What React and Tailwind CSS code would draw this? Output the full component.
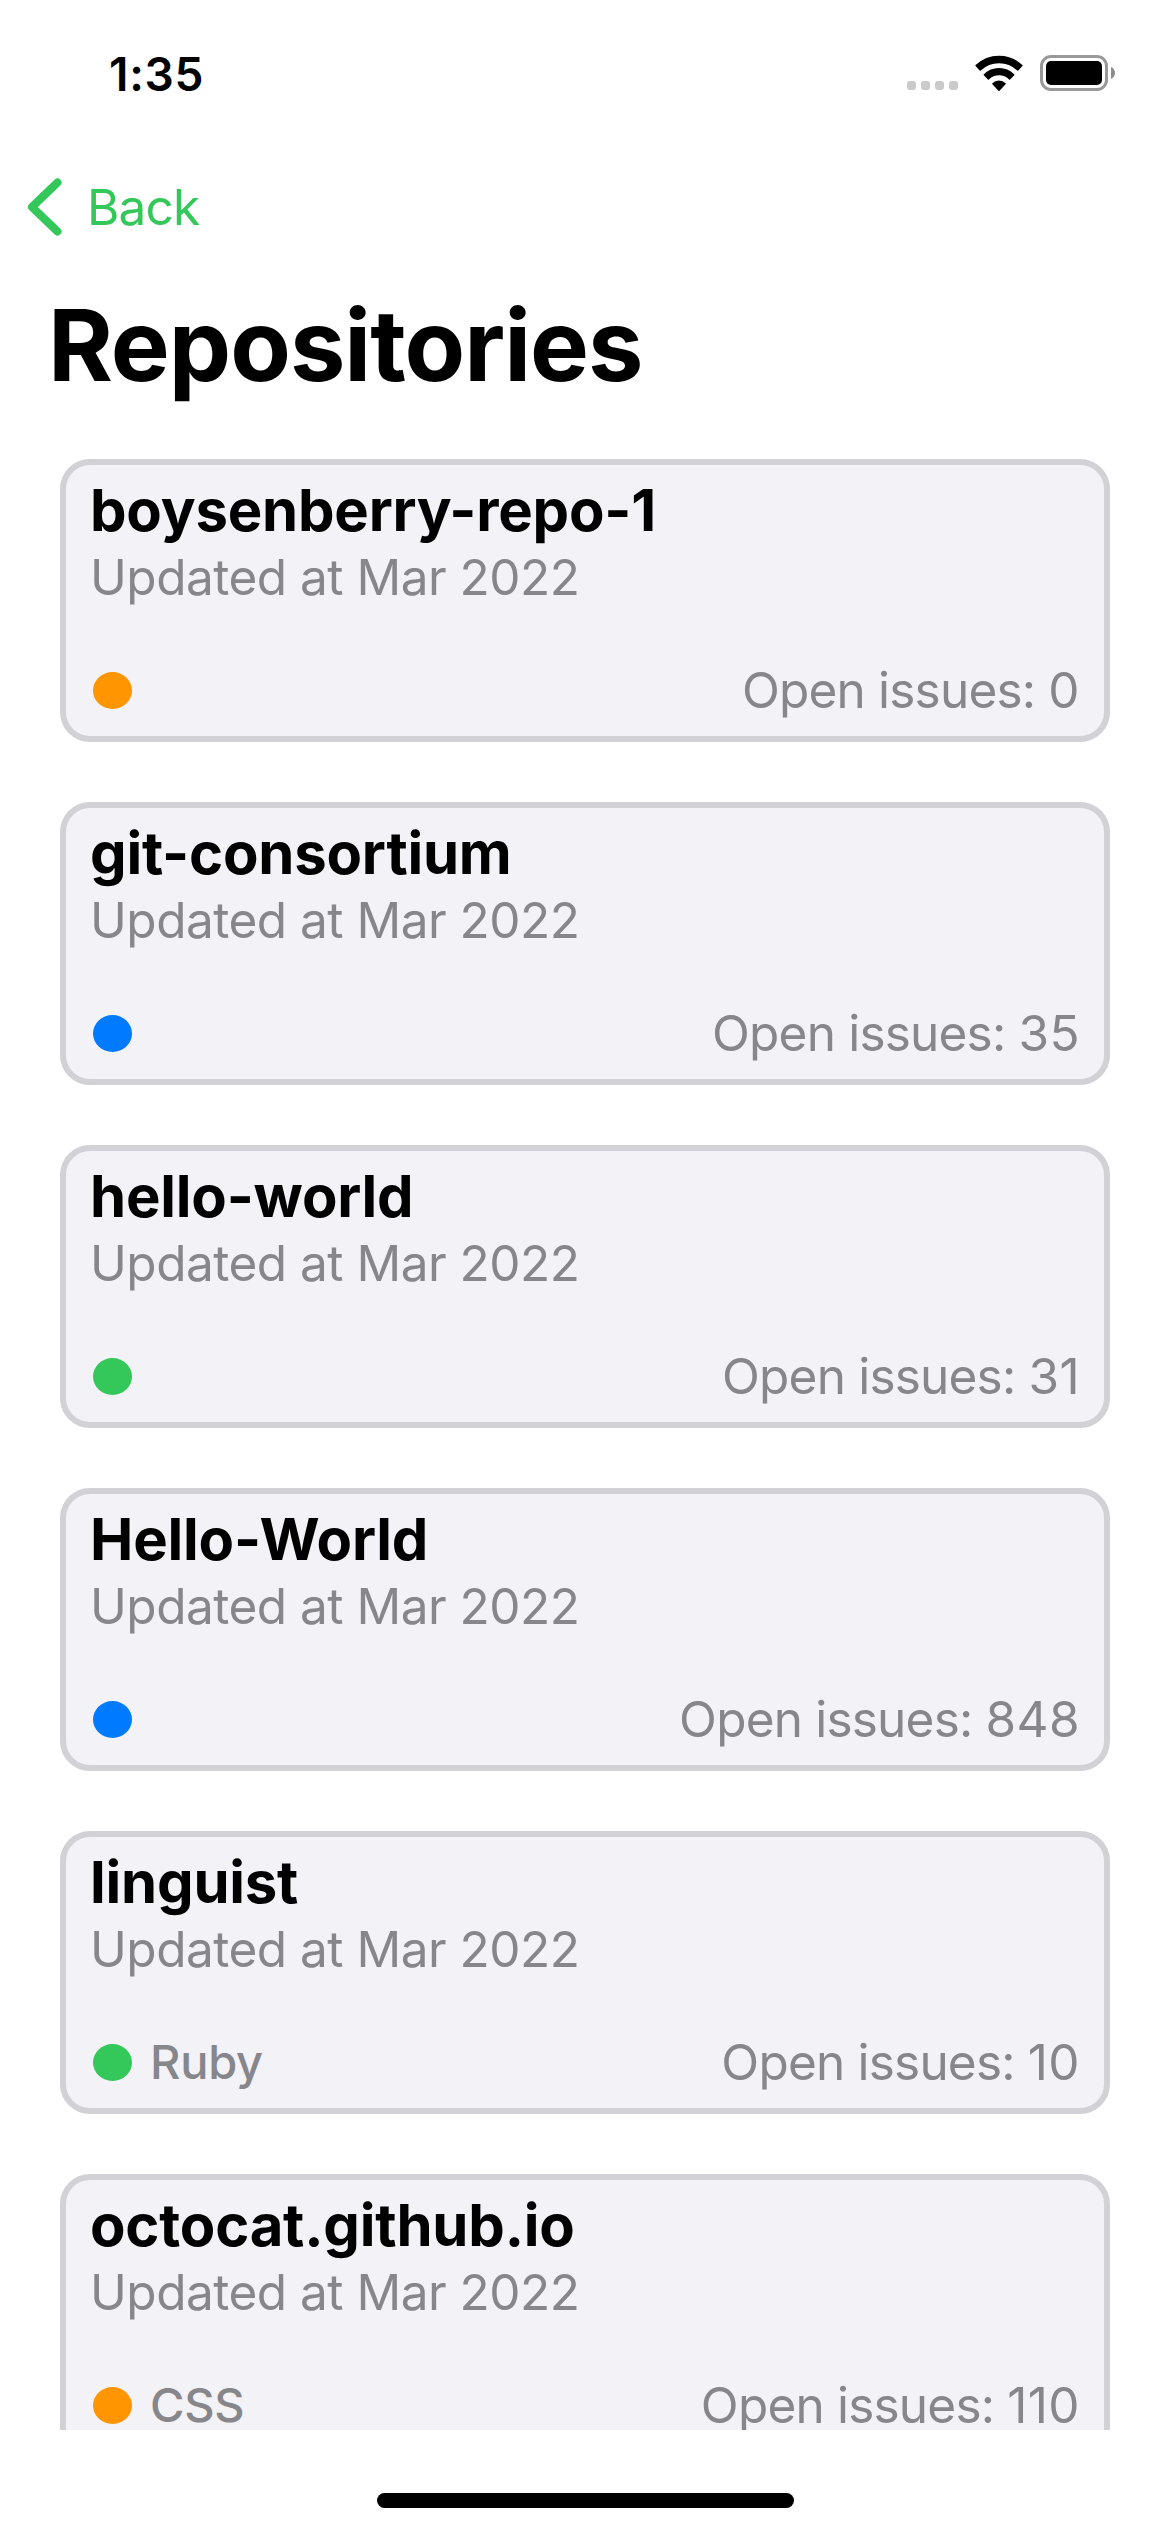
const repositories = [
  { name: "boysenberry-repo-1", dot: "bg-[#ff9500]", issues: 0 },
  { name: "git-consortium", dot: "bg-[#007aff]", issues: 35 },
  { name: "hello-world", dot: "bg-[#34c759]", issues: 31 },
  { name: "Hello-World", dot: "bg-[#007aff]", issues: 848 },
  { name: "linguist", dot: "bg-[#34c759]", language: "Ruby", issues: 10 },
  { name: "octocat.github.io", dot: "bg-[#ff9500]", language: "CSS", issues: 110 },
];

function WifiIcon() {
  return (
    <svg width="50" height="38" viewBox="-1 -1 50 38" className="block" strokeLinejoin="round">
      <g fill="#000" stroke="#000" strokeWidth="1.4">
        <path d="M1.1 10.6A33.3 33.3 0 0 1 46.9 10.6L42.8 15A27.2 27.2 0 0 0 5.2 15Z" />
        <path d="M9.3 19.7A20.8 20.8 0 0 1 38.7 19.7L34.6 24A15.1 15.1 0 0 0 13.4 24Z" />
        <path d="M17.9 28.8A8.3 8.3 0 0 1 30.1 28.8L24 35.3Z" />
      </g>
    </svg>
  );
}

function BatteryIcon() {
  return (
    <div className="flex items-center gap-[3px]">
      <div className="h-9 w-[68px] rounded-[11px] border-[3px] border-[#999] p-[3px]">
        <div className="h-full rounded-[5px] bg-black" />
      </div>
      <svg width="4" height="12" viewBox="0 0 4 12" className="block">
        <path d="M0 0C2.5 1 4 3.4 4 6S2.5 11 0 12Z" fill="#8c8c8c" />
      </svg>
    </div>
  );
}

function StatusBar() {
  return (
    <div className="flex h-[141px] shrink-0 items-start justify-between pt-[44px] pr-[55px] pl-[109px]">
      <span className="text-[46px] leading-[60px] font-semibold tracking-[0.7px]">1:35</span>
      <div className="flex items-end pt-[10px]">
        <div className="mb-[2px] flex gap-[5px]">
          <span className="size-[9px] rounded-[3px] bg-[#cacaca]" />
          <span className="size-[9px] rounded-[3px] bg-[#cacaca]" />
          <span className="size-[9px] rounded-[3px] bg-[#cacaca]" />
          <span className="size-[9px] rounded-[3px] bg-[#cacaca]" />
        </div>
        <div className="ml-4">
          <WifiIcon />
        </div>
        <div className="mb-px ml-4">
          <BatteryIcon />
        </div>
      </div>
    </div>
  );
}

function RepositoryCard({ name, dot, language, issues }) {
  return (
    <li className="h-[283px] shrink-0 rounded-[30px] border-6 border-[#d1d1d6] bg-[#f2f2f7] pt-[9px] pr-6 pl-6">
      <h2 className="text-[58px] leading-[72px] font-bold tracking-[-0.2px]">{name}</h2>
      <p className="mt-px text-[49.5px] leading-[60px] tracking-[-0.5px] text-[#86868b]">Updated at Mar 2022</p>
      <div className="mt-[53px] flex h-[60px] items-center justify-between text-[#86868b]">
        <div className="flex items-center">
          <span className={`ml-[3px] h-[37px] w-[39px] rounded-[50%] ${dot}`} />
          {language && (
            <span className="ml-[18px] text-[47px] leading-[60px] font-medium tracking-[-0.3px]">{language}</span>
          )}
        </div>
        <p className="text-[49.5px] leading-[60px] tracking-[-0.8px]">
          Open issues: <span className="tracking-[0.4px]">{issues}</span>
        </p>
      </div>
    </li>
  );
}

export default function App() {
  return (
    <div className="flex h-[2532px] w-[1170px] flex-col overflow-hidden bg-white font-['Inter',sans-serif] text-black">
      <StatusBar />
      <nav className="flex h-[132px] shrink-0 items-center pl-[27px] text-[#34c759]">
        <button className="flex items-center gap-[24px]">
          <svg width="36" height="58" viewBox="0 0 36 58" className="block" fill="none">
            <path d="M30.5 4.5L5 29L30.5 53.5" stroke="currentColor" strokeWidth="8" strokeLinecap="round" strokeLinejoin="round" />
          </svg>
          <span className="text-[49.5px] leading-[60px] tracking-[-0.8px]">Back</span>
        </button>
      </nav>
      <h1 className="mt-3 shrink-0 pl-12 text-[99px] leading-[120px] font-bold tracking-[-1px]">Repositories</h1>
      <ul className="mt-[54px] flex h-[1971px] shrink-0 flex-col gap-[60px] overflow-hidden px-[60px]">
        {repositories.map((repo) => (
          <RepositoryCard key={repo.name} {...repo} />
        ))}
      </ul>
      <div className="mt-[63px] h-[15px] w-[417px] shrink-0 self-center rounded-full bg-black" />
    </div>
  );
}
